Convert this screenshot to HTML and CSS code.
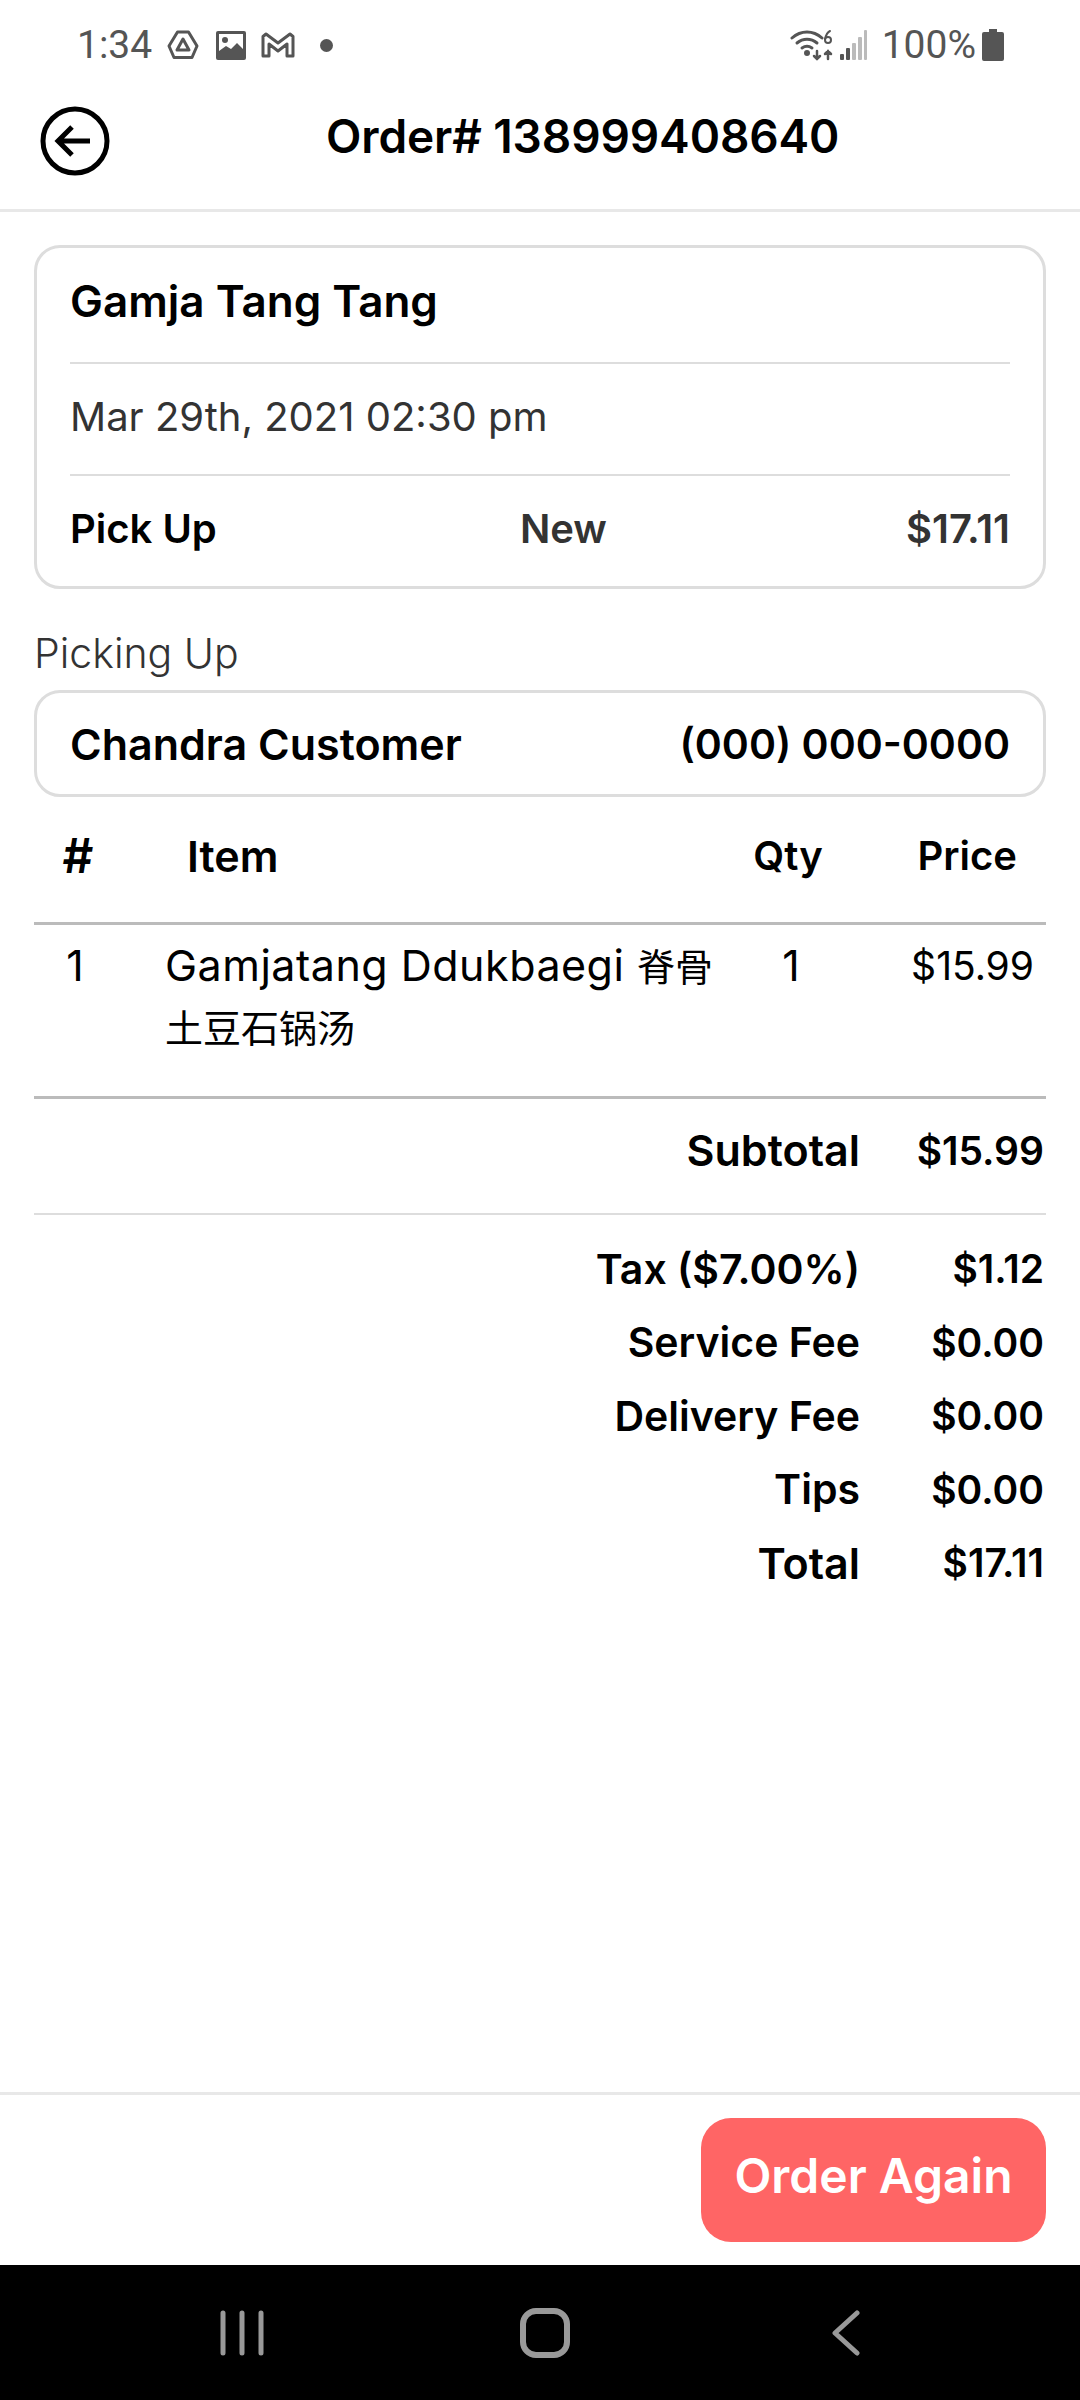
FILE: index.html
```html
<!DOCTYPE html>
<html lang="en">
<head>
  <meta charset="UTF-8">
  <meta name="viewport" content="width=device-width, initial-scale=1.0">
  <title>Order Details</title>
  <link rel="stylesheet" href="styles.css">
</head>
<body>
  <div class="status-bar">
    <div class="status-left">
      <span class="status-time">1:34</span>
      <svg class="ic-drive" width="32" height="30" viewBox="0 0 32 30" fill="none" stroke="#555" stroke-width="3" stroke-linejoin="round"><path d="M10.500 2h11L30 16l-5 11.500H7L2 16z"/><path d="M16 9l6 11H10z"/></svg>
      <svg class="ic-photo" width="30" height="29" viewBox="0 0 30 29"><rect width="30" height="29" rx="2" fill="#555"/><rect x="3" y="3" width="24" height="20" fill="#fff"/><circle cx="9" cy="9" r="3" fill="#555"/><path d="M3 20l7-5 5 3 6-6 6 6v11H3z" fill="#555"/></svg>
      <svg class="ic-mail" width="34" height="26" viewBox="0 0 34 26" fill="none" stroke="#555" stroke-width="3" stroke-linejoin="round"><path d="M2 4.500V24h6V12l9 7 9-7v12h6V4.500L29 2l-12 9L5 2z"/></svg>
      <span class="status-dot"></span>
    </div>
    <div class="status-right">
      <svg width="44" height="32" viewBox="0 0 44 32" fill="none" stroke="#555" stroke-width="3" stroke-linecap="round"><path d="M2 9c9-8 21-8 30 0"/><path d="M7 14c6-5 14-5 20 0"/><path d="M12 19c3-2 7-2 10 0"/><circle cx="17" cy="24" r="1.500" fill="#555"/><path d="M27 22v8m-3-3l3 3 3-3" stroke-width="2.500"/><path d="M38 30v-8m-3 3l3-3 3 3" stroke-width="2.500"/><circle cx="38" cy="11" r="3" stroke-width="2"/><path d="M40 2c-2 1-4 4-5 8" stroke-width="2"/></svg>
      <svg class="ic-signal" width="27" height="30" viewBox="0 0 27 30"><rect x="0" y="24" width="4" height="6" rx="1" fill="#555"/><rect x="6" y="18" width="4" height="12" rx="1" fill="#555"/><rect x="12" y="13" width="4" height="17" rx="1" fill="#bbb"/><rect x="18" y="7" width="4" height="23" rx="1" fill="#bbb"/><rect x="24" y="0" width="3" height="30" rx="1" fill="#bbb"/></svg>
      <span class="status-battery">100%</span>
      <svg class="ic-battery" width="22" height="32" viewBox="0 0 22 32"><path d="M7 0h8v3h5a2 2 0 0 1 2 2v25a2 2 0 0 1-2 2H2a2 2 0 0 1-2-2V5a2 2 0 0 1 2-2h5z" fill="#555"/></svg>
    </div>
  </div>

  <header class="top-bar">
    <svg class="back-icon" width="70" height="70" viewBox="0 0 70 70" fill="none" stroke="#000" stroke-width="5"><circle cx="35" cy="35" r="32"/><path d="M50 35H19M32 21L18 35l14 14"/></svg>
    <h1 class="top-title">Order# 138999408640</h1>
  </header>

  <main class="content">
    <section class="card">
      <div class="card-row strong black store">Gamja Tang Tang</div>
      <div class="card-row date">Mar 29th, 2021 02:30 pm</div>
      <div class="card-row split strong">
        <span class="black">Pick Up</span>
        <span class="status-new">New</span>
        <span>$17.11</span>
      </div>
    </section>

    <div class="picking-label">Picking Up</div>
    <section class="card customer">
      <span class="customer-name">Chandra Customer</span>
      <span>(000) 000-0000</span>
    </section>

    <div class="items-head items-grid">
      <span class="col-num">#</span>
      <span class="col-item">Item</span>
      <span class="col-qty">Qty</span>
      <span class="col-price">Price</span>
    </div>
    <div class="items-row items-grid">
      <span class="col-num">1</span>
      <div class="col-item"><span>Gamjatang Ddukbaegi </span><span class="cjk">脊骨</span><br><span class="cjk">土豆石锅汤</span></div>
      <span class="col-qty">1</span>
      <span class="col-price">$15.99</span>
    </div>

    <div class="sum-line subtotal"><span class="sum-wide">Subtotal</span><span class="sum-val">$15.99</span></div>
    <div class="sum-list">
      <div class="sum-line"><span>Tax ($7.00%)</span><span class="sum-val">$1.12</span></div>
      <div class="sum-line"><span>Service Fee</span><span class="sum-val">$0.00</span></div>
      <div class="sum-line"><span>Delivery Fee</span><span class="sum-val">$0.00</span></div>
      <div class="sum-line"><span>Tips</span><span class="sum-val">$0.00</span></div>
      <div class="sum-line"><span class="sum-wide">Total</span><span class="sum-val">$17.11</span></div>
    </div>
  </main>

  <footer class="action-bar">
    <button class="order-btn">Order Again</button>
  </footer>

  <nav class="nav-bar">
    <svg width="44" height="46" viewBox="0 0 44 46" fill="none" stroke="#999" stroke-width="5" stroke-linecap="round"><path d="M3 3v40M22 3v40M41 3v40"/></svg>
    <svg class="nav-home" width="50" height="50" viewBox="0 0 50 50" fill="none" stroke="#999" stroke-width="6"><rect x="3" y="3" width="44" height="44" rx="13"/></svg>
    <svg width="28" height="46" viewBox="0 0 28 46" fill="none" stroke="#999" stroke-width="5" stroke-linecap="round" stroke-linejoin="round"><path d="M25 3L3 23l22 20"/></svg>
  </nav>
</body>
</html>
```

FILE: styles.css
```css
* {
  box-sizing: border-box;
}
body {
  margin: 0;
  width: 1080px;
  height: 2400px;
  display: flex;
  flex-direction: column;
  background-color: #fff;
  font-family: Inter, "Noto Sans CJK SC", sans-serif;
  color: #000;
}

.status-bar {
  height: 90px;
  padding: 22px 76px 0 77px;
  display: flex;
  justify-content: space-between;
  align-items: flex-start;
  font-family: Roboto, sans-serif;
  font-size: 39px;
  color: #555;
}
.status-left,
.status-right {
  display: flex;
  align-items: center;
  height: 46px;
}
.status-time {
  margin-right: 15px;
}
.ic-photo {
  margin-left: 17px;
}
.ic-mail {
  margin-left: 15px;
}
.status-dot {
  width: 13px;
  height: 13px;
  margin-left: 25px;
  border-radius: 50%;
  background-color: #555;
}
.ic-signal {
  margin-left: 6px;
}
.status-battery {
  margin-left: 15px;
  margin-right: 6px;
}

.top-bar {
  height: 122px;
  padding: 0 0 28px 40px;
  position: relative;
  display: flex;
  align-items: center;
  border-bottom: 3px solid #e8e8e8;
}
.back-icon {
  margin-top: 10px;
}
.top-title {
  margin: 0 0 0 216px;
  font-size: 46px;
  font-weight: 600;
  letter-spacing: -0.1px;
}

.content {
  flex: 1;
  padding: 33px 34px 0;
}

.card {
  border: 3px solid #ddd;
  border-radius: 26px;
  padding: 0 33px;
  font-size: 40px;
}
.card-row {
  height: 112px;
  padding-bottom: 5px;
  display: flex;
  align-items: center;
  border-bottom: 2px solid #ddd;
  color: #333;
}
.card-row:last-child {
  height: 110px;
  border-bottom: none;
}
.store {
  height: 116px;
  padding-bottom: 8px;
  font-size: 44px;
}
.strong {
  font-weight: 600;
}
.black {
  color: #000;
}
.date {
  font-weight: 400;
}
.split {
  justify-content: space-between;
}
.status-new {
  margin-left: 4px;
}

.picking-label {
  margin-top: 35px;
  height: 58px;
  font-size: 41px;
  font-weight: 300;
  color: #333;
  display: flex;
  align-items: center;
}
.customer {
  margin-top: 8px;
  height: 107px;
  display: flex;
  justify-content: space-between;
  align-items: center;
  font-size: 41px;
  font-weight: 600;
}
.customer-name {
  font-size: 43px;
}

.items-grid {
  display: grid;
  grid-template-columns: 88px 1fr 130px 193px;
}
.items-head {
  height: 128px;
  padding-bottom: 8px;
  align-items: center;
  border-bottom: 3px solid #bbb;
  font-size: 40px;
  font-weight: 600;
}
.items-head .col-num {
  font-size: 48px;
}
.items-row {
  height: 174px;
  padding-top: 11px;
  border-bottom: 3px solid #bbb;
  font-size: 43px;
  line-height: 59px;
}
.col-num,
.col-qty {
  text-align: center;
}
.col-price {
  text-align: right;
}
.items-head .col-item {
  padding-left: 65px;
  font-size: 43px;
}
.items-row .col-num {
  padding-right: 6px;
}
.items-row .col-item {
  padding-left: 43px;
  letter-spacing: 0.5px;
}
.items-row .col-qty {
  padding-left: 6px;
}
.items-row .col-price {
  font-size: 39px;
  padding-right: 12px;
}
.items-head .col-price {
  padding-right: 29px;
}
.cjk {
  font-size: 38px;
  letter-spacing: 0;
}

.sum-line {
  display: flex;
  justify-content: flex-end;
  align-items: center;
  height: 73.5px;
  padding-right: 2px;
  font-size: 41px;
  font-weight: 600;
}
.sum-val {
  width: 184px;
  text-align: right;
  font-size: 39px;
}
.sum-wide {
  font-size: 43px;
}
.subtotal {
  height: 116px;
  padding-bottom: 12px;
  border-bottom: 2px solid #ddd;
}
.sum-list {
  padding-top: 17px;
}

.action-bar {
  height: 173px;
  padding: 23px 34px 0;
  display: flex;
  justify-content: flex-end;
  align-items: flex-start;
  border-top: 3px solid #e8e8e8;
}
.order-btn {
  width: 345px;
  height: 124px;
  padding-bottom: 10px;
  border: none;
  border-radius: 30px;
  background-color: #ff6565;
  color: #fff;
  font-family: inherit;
  font-size: 48px;
  font-weight: 600;
}

.nav-bar {
  height: 135px;
  padding: 0 220px;
  display: flex;
  justify-content: space-between;
  align-items: center;
  background-color: #000;
}
.nav-home {
  margin-left: -6px;
}
```
